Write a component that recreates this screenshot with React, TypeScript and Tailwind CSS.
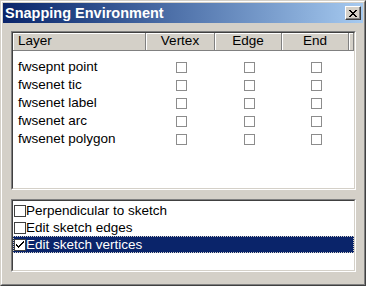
import React from "react";

const layers = ["fwsepnt point", "fwsenet tic", "fwsenet label", "fwsenet arc", "fwsenet polygon"];

const options = [
  { label: "Perpendicular to sketch", checked: false, selected: false },
  { label: "Edit sketch edges", checked: false, selected: false },
  { label: "Edit sketch vertices", checked: true, selected: true },
];

function Sunken({ className, children }: { className: string; children: React.ReactNode }) {
  return (
    <div className={`border border-t-[#808080] border-l-[#808080] border-r-white border-b-white ${className}`}>
      <div className="h-full border border-t-[#404040] border-l-[#404040] border-r-[#d4d0c8] border-b-[#d4d0c8] bg-white">
        {children}
      </div>
    </div>
  );
}

function HeaderCell({ label, align = "center" }: { label?: string; align?: "left" | "center" }) {
  return (
    <div
      className={`flex h-[18px] items-center border-r border-b border-r-[#808080] border-b-[#808080] bg-[#d4d0c8] shadow-[inset_1px_1px_0_#ffffff] ${
        align === "left" ? "justify-start pl-[5px]" : "justify-center"
      }`}
    >
      {label}
    </div>
  );
}

function FlatBox() {
  return <div className="ml-[2px] h-[11px] w-[11px] border border-[#8c8c8c] bg-white" />;
}

export default function App() {
  return (
    <div
      className="h-[286px] w-[366px] overflow-hidden border border-t-[#d4d0c8] border-l-[#d4d0c8] border-r-[#404040] border-b-[#404040] bg-[#d4d0c8] text-[13.5px] text-black"
      style={{ fontFamily: '"Liberation Sans", Arial, sans-serif' }}
    >
      <div className="h-full border border-t-white border-l-white border-r-[#808080] border-b-[#808080] p-px">
        {/* title bar */}
        <div className="flex h-[20px] items-center justify-between bg-gradient-to-r from-[#0a246a] to-[#a6caf0] pl-[2px] pr-[2px]">
          <span className="text-[14.5px] font-bold leading-none text-white">Snapping Environment</span>
          <button
            type="button"
            className="flex h-[14px] w-[16px] items-center justify-center border border-t-white border-l-white border-r-[#404040] border-b-[#404040] bg-[#d4d0c8] shadow-[inset_-1px_-1px_0_#808080]"
          >
            <svg width="8" height="7" viewBox="0 0 8 7" shapeRendering="crispEdges">
              <path d="M0 0h2v1h-2zM6 0h2v1h-2zM1 1h2v1h-2zM5 1h2v1h-2zM2 2h4v1h-4zM3 3h2v1h-2zM2 4h4v1h-4zM1 5h2v1h-2zM5 5h2v1h-2zM0 6h2v1h-2zM6 6h2v1h-2z" fill="#000" />
            </svg>
          </button>
        </div>

        <div className="flex flex-col gap-[9px] pl-[8px] pt-[8px]">
          {/* layers list */}
          <Sunken className="h-[159px] w-[345px]">
            <div className="grid grid-cols-[133px_69px_67px_67px_1fr]">
              <HeaderCell label="Layer" align="left" />
              <HeaderCell label="Vertex" />
              <HeaderCell label="Edge" />
              <HeaderCell label="End" />
              <HeaderCell />
            </div>
            <div className="pt-[6px]">
              {layers.map((name) => (
                <div key={name} className="grid h-[18px] grid-cols-[133px_69px_67px_67px_1fr] items-center">
                  <div className="pl-[5px]">{name}</div>
                  <div className="flex justify-center">
                    <FlatBox />
                  </div>
                  <div className="flex justify-center">
                    <FlatBox />
                  </div>
                  <div className="flex justify-center">
                    <FlatBox />
                  </div>
                  <div />
                </div>
              ))}
            </div>
          </Sunken>

          {/* options list */}
          <Sunken className="h-[73px] w-[345px]">
            <div className="pt-px">
              {options.map((o) => (
                <div
                  key={o.label}
                  className={`flex h-[17px] items-center ${
                    o.selected ? "border border-dotted border-[#d4d0c8] bg-[#0a246a] text-white" : "border border-transparent"
                  }`}
                >
                  <div className="flex h-[12px] w-[12px] items-center justify-center border border-[#404040] bg-white">
                    {o.checked && (
                      <svg width="8" height="7" viewBox="0 0 8 7" shapeRendering="crispEdges">
                        <path d="M7 0h1v2h-1zM6 1h1v2h-1zM5 2h1v2h-1zM4 3h1v2h-1zM3 4h1v2h-1zM2 5h1v2h-1zM1 4h1v2h-1zM0 3h1v2h-1z" fill="#000" />
                      </svg>
                    )}
                  </div>
                  <span className="leading-none">{o.label}</span>
                </div>
              ))}
            </div>
          </Sunken>
        </div>
      </div>
    </div>
  );
}
